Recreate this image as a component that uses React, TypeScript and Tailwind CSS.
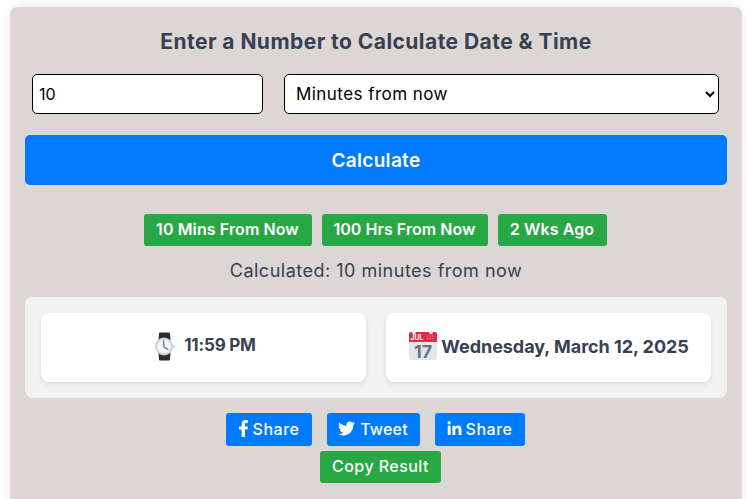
import { FaFacebookF, FaTwitter, FaLinkedinIn } from "react-icons/fa";

function Watch() {
  return (
    <svg width="29" height="29" viewBox="0 0 29 29" className="shrink-0">
      <path d="M8 1.500Q8 .5 9 .5h9q1 0 1 1L19.500 8h-12zM7.500 21h12L19 27.500q0 1-1 1H9q-1 0-1-1z" fill="#292f33" />
      <rect x="21" y="13.500" width="3.500" height="2.500" rx="1" fill="#ccd6dd" />
      <circle cx="13" cy="14.500" r="9" fill="#ccd6dd" />
      <circle cx="13" cy="14.500" r="6.800" fill="#f5f8fa" />
      <path d="M12.500 9 13 15l4 2.500" fill="none" stroke="#66757f" strokeWidth="1.300" strokeLinecap="round" />
    </svg>
  );
}

function CalendarIcon() {
  return (
    <svg width="29" height="36" viewBox="-1 -4 29 36" className="shrink-0">
      <path d="M0 10h28v15.500q0 2.500-2.500 2.500h-23Q0 28 0 25.500z" fill="#e1e8ed" />
      <path d="M0 10V2Q0 0 2 0h24q2 0 2 2v8z" fill="#dd2e44" />
      <circle cx="5" cy="0.500" r="1.800" fill="#f5f8fa" />
      <circle cx="22" cy="0.500" r="1.800" fill="#f5f8fa" />
      <text x="8" y="8" textAnchor="middle" fontSize="7" fontWeight="700" fill="#f5f8fa" fontFamily="Inter, sans-serif">JUL</text>
      <path d="M18 4h1.200M20.500 4h1.200M23 4h1.200M18 6.500h1.200M20.500 6.500h1.200M23 6.500h1.200" stroke="#f5a3ad" strokeWidth="1" />
      <text x="14" y="26" textAnchor="middle" fontSize="18" fontWeight="700" fill="#66757f" fontFamily="Inter, sans-serif">17</text>
    </svg>
  );
}

export default function App() {
  return (
    <div className="bg-white h-[499px] overflow-hidden pt-[7px] px-[10px] font-['Inter',sans-serif]">
      <div className="w-[732px] h-[520px] bg-[#dcd7d4] rounded-lg shadow-[0_0_10px_rgba(0,0,0,0.1)] px-[15px] pt-[20px]">
        <h2 className="text-center text-[21px] leading-[30px] font-bold text-[#374151] tracking-[0.45px]">
          Enter a Number to Calculate Date &amp; Time
        </h2>
        <div className="flex gap-[21px] mt-[17px] px-[7px]">
          <input
            readOnly
            value="10"
            className="w-[231px] h-[40px] bg-white border border-black rounded-[5px] px-[6px] text-[16px] text-black outline-none"
          />
          <select className="w-[435px] h-[40px] bg-white border border-black rounded-[5px] pl-[7px] text-[17px] tracking-[0.45px] text-black outline-none">
            <option>Minutes from now</option>
          </select>
        </div>
        <button className="block w-full h-[50px] mt-[21px] pt-[2px] bg-[#007bff] rounded-[5px] text-white text-[19px] tracking-[0.3px] font-semibold">
          Calculate
        </button>
        <div className="flex justify-center gap-[10px] mt-[29px] pr-[2px]">
          <button className="w-[168px] h-[32px] pb-[2px] bg-[#28a745] rounded-[3px] text-white text-[16px] tracking-[0.1px] font-semibold">10 Mins From Now</button>
          <button className="w-[166px] h-[32px] pb-[2px] bg-[#28a745] rounded-[3px] text-white text-[16px] tracking-[0.05px] font-semibold">100 Hrs From Now</button>
          <button className="w-[109px] h-[32px] pb-[2px] bg-[#28a745] rounded-[3px] text-white text-[16px] tracking-[0.1px] font-semibold">2 Wks Ago</button>
        </div>
        <p className="text-center text-[18px] leading-[25px] mt-[12px] mb-[14px] tracking-[0.5px] text-[#374151]">Calculated: 10 minutes from now</p>
        <div className="flex gap-[20px] p-[16px] bg-[#f2f2f2] rounded-lg">
          <div className="flex-1 h-[69px] pb-[3px] flex items-center justify-center gap-[4px] bg-white rounded-lg shadow-[0_2px_4px_rgba(0,0,0,0.1)] text-[17px] tracking-[-0.2px] font-bold text-[#374151]">
            <Watch />
            <span>11:59 PM</span>
          </div>
          <div className="flex-1 h-[69px] pb-[3px] flex items-center justify-center gap-[4px] bg-white rounded-lg shadow-[0_2px_4px_rgba(0,0,0,0.1)] text-[18px] tracking-[-0.04px] font-bold text-[#374151]">
            <CalendarIcon />
            <span>Wednesday, March 12, 2025</span>
          </div>
        </div>
        <div className="flex justify-center gap-[15px] mt-[15px] pr-[2px]">
          <button className="w-[86px] h-[33px] pb-[2px] flex items-center justify-center gap-[4px] bg-[#007bff] rounded-[3px] text-white text-[16px] tracking-[0.5px] font-medium"><FaFacebookF className="w-[11px] h-[17px]" />Share</button>
          <button className="w-[93px] h-[33px] pb-[2px] flex items-center justify-center gap-[5px] bg-[#007bff] rounded-[3px] text-white text-[16px] tracking-[0.2px] font-medium"><FaTwitter className="w-[17px] h-[17px]" />Tweet</button>
          <button className="w-[90px] h-[33px] pb-[2px] flex items-center justify-center gap-[4px] bg-[#007bff] rounded-[3px] text-white text-[16px] tracking-[0.5px] font-medium"><FaLinkedinIn className="w-[15px] h-[16px]" />Share</button>
        </div>
        <div className="flex justify-center mt-[5px] pl-[9px]">
          <button className="w-[121px] h-[32px] pb-[2px] bg-[#28a745] rounded-[3px] text-white text-[16px] tracking-[0.45px] font-medium">Copy Result</button>
        </div>
      </div>
    </div>
  );
}
